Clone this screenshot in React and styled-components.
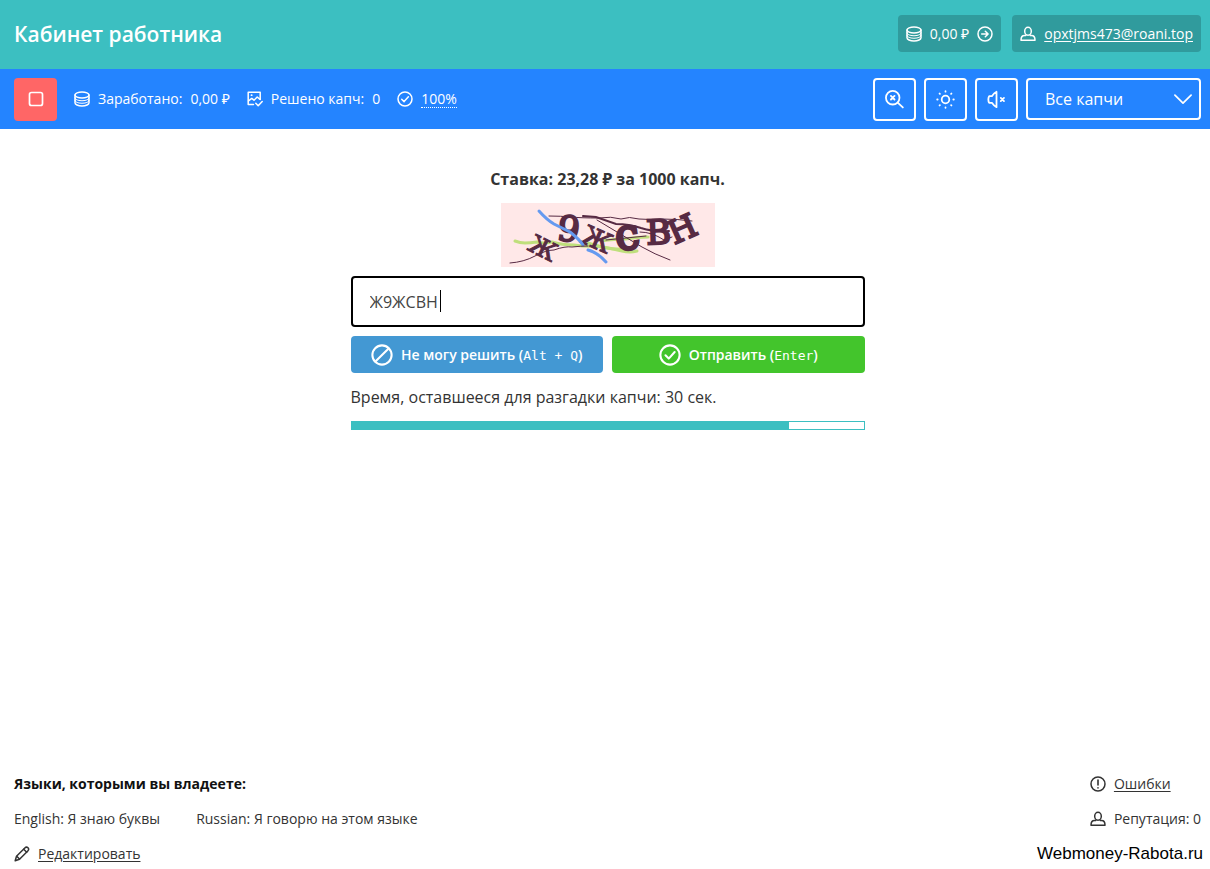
import React, { useState } from 'react';
import styled, { createGlobalStyle } from 'styled-components';

const GlobalStyle = createGlobalStyle`
  * { box-sizing: border-box; }
  body {
    margin: 0;
    background: #fff;
    color: #333;
    font: 14px/20px "Open Sans", "Noto Sans", sans-serif;
  }
  button, input, select { font: inherit; }
`;

//#region layout
const Page = styled.div`
  display: flex;
  flex-direction: column;
  min-height: 100vh;
`;
const Header = styled.header`
  display: flex;
  align-items: center;
  justify-content: space-between;
  min-height: 69px;
  padding: 0 9px 2px 14px;
  background: #3cbfc1;
  color: #fff;
`;
const Title = styled.h1`
  margin: 0;
  font-size: 21px;
  line-height: 32px;
  font-weight: 600;
`;
const Toolbar = styled.div`
  display: flex;
  align-items: center;
  justify-content: space-between;
  min-height: 60px;
  padding: 0 9px 0 14px;
  background: #2484ff;
  color: #fff;
`;
const Group = styled.div`
  display: flex;
  align-items: center;
  gap: ${({ $gap }) => $gap}px;
`;
const Main = styled.main`
  flex: 1;
  display: flex;
  flex-direction: column;
  align-items: center;
  padding: 38px 9px 24px 14px;
`;
const Footer = styled.footer`
  position: relative;
  display: flex;
  justify-content: space-between;
  padding: 0 9px 5px 14px;
`;
const FooterColumn = styled.div`
  display: flex;
  flex-direction: column;
  gap: 15px;
`;
//#endregion

//#region parts
const Svg = styled.svg`
  flex: none;
  display: block;
  fill: none;
  stroke: currentColor;
  stroke-linecap: round;
  stroke-linejoin: round;
`;
const Badge = styled.div`
  display: flex;
  align-items: center;
  gap: 8px;
  height: 37px;
  padding: 0 8px;
  border-radius: 4px;
  background: #309b9d;
`;
const Link = styled.a`
  color: inherit;
  text-underline-offset: 2px;
`;
const StopButton = styled.button`
  display: grid;
  place-items: center;
  width: 43px;
  height: 43px;
  padding: 0;
  border: 0;
  border-radius: 4px;
  background: #ff6666;
  color: #fff;
`;
const Percent = styled.span`
  line-height: 16px;
  border-bottom: 1px dotted #fff;
`;
const ToolButton = styled.button`
  display: grid;
  place-items: center;
  width: 43px;
  height: 43px;
  padding: 0;
  border: 2px solid #fff;
  border-radius: 4px;
  background: transparent;
  color: #fff;
`;
const SelectWrap = styled.div`
  position: relative;
  height: 43px;

  svg {
    position: absolute;
    top: 12px;
    right: 9px;
    pointer-events: none;
  }
`;
const Select = styled.select`
  appearance: none;
  width: 175px;
  height: 42px;
  padding: 0 36px 0 17px;
  border: 2px solid #fff;
  border-radius: 4px;
  background: transparent;
  color: #fff;
  font-size: 16px;
`;
const Task = styled.form`
  display: flex;
  flex-direction: column;
  align-items: stretch;
  width: 100%;
  max-width: 514px;
`;
const Rate = styled.p`
  margin: 0 0 12px;
  font-size: 16px;
  line-height: 24px;
  font-weight: 700;
  text-align: center;
`;
const Captcha = styled.svg`
  display: block;
  align-self: center;
  width: 214px;
  height: 64px;
  margin-bottom: 9px;
  background: #ffe8e8;
  fill: none;
`;
const Field = styled.div`
  position: relative;
`;
const Answer = styled.input`
  display: block;
  width: 100%;
  height: 51px;
  padding: 0 17px;
  border: 2px solid #000;
  border-radius: 4px;
  outline: 0;
  background: #fff;
  color: #444;
  font-size: 16px;
  caret-color: transparent;
`;
const Caret = styled.i`
  position: absolute;
  top: 14px;
  left: 89px;
  width: 1px;
  height: 22px;
  background: #000;
`;
const Actions = styled.div`
  display: grid;
  grid-template-columns: 1fr 1fr;
  gap: 9px;
  margin: 9px 0 12px;
`;
const Action = styled.button`
  display: flex;
  align-items: center;
  justify-content: center;
  gap: 8px;
  height: 37px;
  padding: 0;
  border: 0;
  border-radius: 4px;
  background: ${({ $color }) => $color};
  color: #fff;
  font-weight: 600;

  kbd { font: 13px "DejaVu Sans Mono", monospace; }
`;
const TimeLeft = styled.p`
  margin: 0 0 12px;
  font-size: 16px;
  line-height: 24px;
`;
const Progress = styled.div`
  height: 9px;
  border: 1px solid #3cbfc1;
`;
const ProgressBar = styled.div`
  height: 100%;
  background: #3cbfc1;
`;
const Languages = styled.div`
  display: flex;
  gap: 36px;
`;
const FooterTitle = styled.strong`
  color: #111;
`;
const SiteMark = styled.span`
  position: absolute;
  right: 7px;
  bottom: 5px;
  color: #000;
  font: 17px/20px "Liberation Sans", Arial, sans-serif;
`;
//#endregion

//#region icons
const Icon = ({ size = 16, width = 1.5, children }) => (
  <Svg width={size} height={size} viewBox="0 0 16 16" strokeWidth={width} aria-hidden="true">
    {children}
  </Svg>
);
const CoinsIcon = () => (
  <Icon>
    <ellipse cx="8" cy="4" rx="7" ry="3" />
    <path d="M1 4v7.700c0 1.800 3 3.300 7 3.300s7-1.500 7-3.300V4" />
    <path d="M1 6.500c0 1.800 3 3.300 7 3.300s7-1.500 7-3.300M1 9c0 1.800 3 3.300 7 3.300s7-1.500 7-3.300" strokeWidth="1.100" />
  </Icon>
);
const ArrowCircleIcon = () => (
  <Icon>
    <circle cx="8" cy="8" r="7" />
    <path d="M4.700 8h6.300M8.300 5.200 11.100 8l-2.800 2.800" />
  </Icon>
);
const UserIcon = () => (
  <Icon>
    <ellipse cx="8" cy="5.200" rx="3.300" ry="4" />
    <path d="M5.800 9.500H4.500C2.500 9.500 1 11.200 1 14.200h14c0-3-1.500-4.700-3.500-4.700h-1.300" />
  </Icon>
);
const SolvedIcon = () => (
  <Icon>
    <path d="M6.500 13.500H1.200V1.200h12v7.300" />
    <path d="m1.500 10 3.200-2.600 2.300 1.800L10.200 6l2.800 2.300" />
    <path d="M4.500 4.200h.2" strokeWidth="1.800" />
    <path d="m8.800 12.300 2.400 2.500 4-4.300" />
  </Icon>
);
const CheckCircleIcon = ({ size, width }) => (
  <Icon size={size} width={width}>
    <circle cx="8" cy="8" r="7" />
    <path d="m4.700 8.200 2.400 2.400 4.300-4.800" />
  </Icon>
);
const SlashCircleIcon = () => (
  <Icon size={22}>
    <circle cx="8" cy="8" r="7" />
    <path d="M3.200 12.800 12.800 3.200" />
  </Icon>
);
const StopIcon = () => (
  <Icon width={1.7}>
    <rect x="1.500" y="1.500" width="13" height="13" rx="2" />
  </Icon>
);
const ZoomIcon = () => (
  <Icon size={19} width={1.5}>
    <circle cx="6.500" cy="6.500" r="5.700" />
    <path d="m10.700 10.700 4.300 4M5 5l3 3M8 5 5 8" />
  </Icon>
);
const SunIcon = () => (
  <Icon size={19} width={1.5}>
    <circle cx="8" cy="8" r="3.200" />
    <path d="M8 1v.4M8 14.600v.4M1 8h.4M14.600 8h.4M3 3l.3.3M12.700 12.700l.3.3M3 13l.3-.3M12.700 3.300l.3-.3" />
  </Icon>
);
const MutedIcon = () => (
  <Icon size={19} width={1.500}>
    <path d="M8 1.500v13c-1.200-.5-2.800-2.100-3.900-3.700H1.800C.9 9.400.9 6.600 1.800 5.200h2.300C5.200 3.600 6.800 2 8 1.500z" />
    <path d="m11.600 6.600 2.700 2.800M14.300 6.600l-2.700 2.800" />
  </Icon>
);
const ChevronIcon = () => (
  <Icon size={18} width={1.500}>
    <path d="M.8 4.500 8 11.700l7.200-7.200" />
  </Icon>
);
const PencilIcon = () => (
  <Icon width={1.500}>
    <path d="m1.200 14.800 1.300-4.500 8.300-8.300c1-1 2.300-1 3.200-.2.800.9.800 2.200-.2 3.200l-8.300 8.300z" />
    <path d="m9.700 3.200 3 3M3 10.500l2.500 2.500" />
  </Icon>
);
const WarningIcon = () => (
  <Icon>
    <circle cx="8" cy="8" r="7" />
    <path d="M8 4v5M8 11.700v.2" strokeWidth="1.600" />
  </Icon>
);
//#endregion

const CaptchaPicture = () => (
  <Captcha viewBox="0 0 214 64" role="img" aria-label="Капча">
    <g stroke="#bfdf7c" strokeWidth="3" strokeLinecap="round">
      <path d="M14 38q5 2 10 2t12-1q6 2 15 0 10 3 22 3 12 2 24 1 16 3 24 5t15 0" />
      <path d="M100 38q14-2 24-2 12-2 23-2M87 40l13 4q15 3 27 2" />
    </g>
    <g fill="#572a43" stroke="#572a43" strokeWidth="1" fontFamily="DejaVu Serif, serif" textAnchor="middle">
      <text fontSize="25" transform="translate(38 53) rotate(27)">Ж</text>
      <text fontSize="35" strokeWidth="2" transform="translate(66 38) rotate(8)">9</text>
      <text fontSize="27" transform="translate(92 45) rotate(24)">Ж</text>
      <text fontSize="43" strokeWidth="3" transform="translate(128 46) rotate(-8)">с</text>
      <text fontSize="34" strokeWidth="2" transform="translate(158 41) rotate(-2)">В</text>
      <text fontSize="32" strokeWidth="2" transform="translate(186 36) rotate(-24)">Н</text>
    </g>
    <g stroke="#659af0" strokeWidth="3" strokeLinecap="round">
      <path d="M38 8q8 9 15 13l16 8q9 7 13 13" />
      <path d="M87 47q9 2 18 12" />
    </g>
    <g stroke="#572a43" strokeWidth="1" strokeLinecap="round">
      <path d="M9 60q14-1 25-7t19-6q11-4 18-3 9-1 16-1" />
      <path d="M48 13q12 0 22 1t28 1q12-2 22 1 8-3 18 0 12 1 23 0 15 0 30 2" />
      <path d="M96 17l20 12 25 15q12 7 28 13" />
      <path d="M105 37l20-2 20-2M139 29q12 0 24 8l8-3" />
    </g>
    <g stroke="#572a43" strokeWidth="2" strokeLinecap="round">
      <path d="M82 13l13 1 20 7q13 0 25 4 13 4 28 3" />
    </g>
  </Captcha>
);

const SECONDS_LEFT = 30;
const TIME_PERCENT = 85.5;

const App = () => {
  const [answer, setAnswer] = useState('Ж9ЖСВН');

  return (
    <Page>
      <GlobalStyle />
      <Header>
        <Title>Кабинет работника</Title>
        <Group $gap={11}>
          <Badge><CoinsIcon />0,00 ₽<ArrowCircleIcon /></Badge>
          <Badge><UserIcon /><Link href="#profile">opxtjms473@roani.top</Link></Badge>
        </Group>
      </Header>

      <Toolbar>
        <Group $gap={17}>
          <StopButton type="button" aria-label="Остановить"><StopIcon /></StopButton>
          <Group $gap={8}><CoinsIcon /><span>Заработано:</span><span>0,00 ₽</span></Group>
          <Group $gap={8}><SolvedIcon /><span>Решено капч:</span><span>0</span></Group>
          <Group $gap={8}><CheckCircleIcon /><Percent>100%</Percent></Group>
        </Group>
        <Group $gap={8}>
          <ToolButton type="button" aria-label="Масштаб"><ZoomIcon /></ToolButton>
          <ToolButton type="button" aria-label="Тема"><SunIcon /></ToolButton>
          <ToolButton type="button" aria-label="Звук"><MutedIcon /></ToolButton>
          <SelectWrap>
            <Select aria-label="Тип капчи" defaultValue="all">
              <option value="all">Все капчи</option>
            </Select>
            <ChevronIcon />
          </SelectWrap>
        </Group>
      </Toolbar>

      <Main>
        <Task onSubmit={(e) => e.preventDefault()}>
          <Rate>Ставка: 23,28 ₽ за 1000 капч.</Rate>
          <CaptchaPicture />
          <Field>
            <Answer
              aria-label="Ответ" autoComplete="off" spellCheck={false}
              value={answer} onChange={(e) => setAnswer(e.target.value)}/>
            {answer === 'Ж9ЖСВН' && <Caret />}
          </Field>
          <Actions>
            <Action type="button" $color="#4398d3">
              <SlashCircleIcon />
              <span>Не могу решить (<kbd>Alt + Q</kbd>)</span>
            </Action>
            <Action type="submit" $color="#43c52c">
              <CheckCircleIcon size={22} />
              <span>Отправить (<kbd>Enter</kbd>)</span>
            </Action>
          </Actions>
          <TimeLeft>Время, оставшееся для разгадки капчи: {SECONDS_LEFT} сек.</TimeLeft>
          <Progress role="progressbar" aria-label="Оставшееся время" aria-valuenow={TIME_PERCENT}>
            <ProgressBar style={{ width: `${TIME_PERCENT}%` }} />
          </Progress>
        </Task>
      </Main>

      <Footer>
        <FooterColumn>
          <FooterTitle>Языки, которыми вы владеете:</FooterTitle>
          <Languages>
            <span>English: Я знаю буквы</span>
            <span>Russian: Я говорю на этом языке</span>
          </Languages>
          <Group $gap={8}><PencilIcon /><Link href="#languages">Редактировать</Link></Group>
        </FooterColumn>
        <FooterColumn>
          <Group $gap={8}><WarningIcon /><Link href="#errors">Ошибки</Link></Group>
          <Group $gap={8}><UserIcon /><span>Репутация: 0</span></Group>
        </FooterColumn>
        <SiteMark>Webmoney-Rabota.ru</SiteMark>
      </Footer>
    </Page>
  );
};

export default App;
